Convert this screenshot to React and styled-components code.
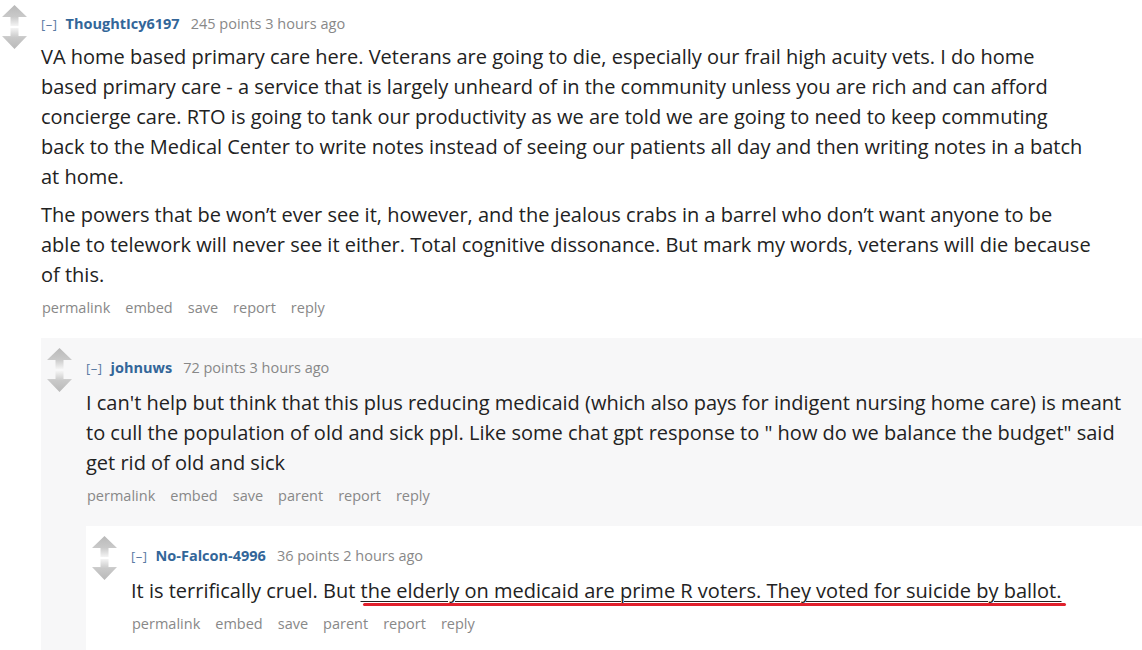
import React from "react";
import styled, { createGlobalStyle } from "styled-components";

const Global = createGlobalStyle`
  html, body { margin: 0; padding: 0; background: #ffffff; }
  body { font-family: "Open Sans", "Noto Sans", sans-serif; overflow: hidden; }
`;

const Page = styled.div`
  width: 1142px;
  height: 650px;
  overflow: hidden;
  background: #fff;
`;

const Comment = styled.div`
  display: flex;
  background: ${(p) => p.$bg};
  padding-bottom: ${(p) => p.$bottom || "0"};
`;

const Votes = styled.div`
  flex: 0 0 auto;
  width: ${(p) => p.$w};
  padding-left: ${(p) => p.$left};
  padding-top: ${(p) => p.$top};
  box-sizing: border-box;
`;

const Main = styled.div`
  flex: 1 1 auto;
  min-width: 0;
`;

const Tagline = styled.div`
  display: flex;
  align-items: baseline;
  font-size: 14.5px;
  line-height: 20px;
  height: 20px;
  margin-top: ${(p) => p.$top};
`;

const Toggle = styled.span`
  color: #5a7ba3;
  font-size: 13px;
  letter-spacing: 0.5px;
  margin-right: 8px;
`;

const Author = styled.span`
  color: #336699;
  font-weight: 700;
  margin-right: 11px;
`;

const Meta = styled.span`
  color: #888;
`;

const Body = styled.div`
  margin-top: ${(p) => p.$gap};
  max-width: 1053px;
  color: #222;
  font-size: 20px;
  line-height: 30px;
`;

const Para = styled.p`
  margin: 0 0 8px 0;
  &:last-child { margin-bottom: 0; }
`;

const Marked = styled.span`
  position: relative;
  text-decoration: underline;
  text-decoration-thickness: 1px;
  text-underline-offset: 3px;
  &::after {
    content: "";
    position: absolute;
    left: 2px;
    right: -4px;
    bottom: -2px;
    height: 3px;
    border-radius: 2px;
    background: #e0202c;
  }
`;

const Actions = styled.ul`
  list-style: none;
  display: flex;
  gap: 15px;
  margin: 8px 0 0 1px;
  padding: 0;
  font-size: 14.5px;
  line-height: 20px;
  color: #888;
`;

const Children = styled.div`
  margin-top: 20px;
`;

function Arrows() {
  return (
    <svg width="25" height="44" viewBox="0 0 25 44">
      <defs>
        <linearGradient id="ga" x1="0" y1="0" x2="0" y2="1">
          <stop offset="0" stopColor="#b9b9b9" />
          <stop offset="0.55" stopColor="#c9c9c9" />
          <stop offset="1" stopColor="#f4f4f4" />
        </linearGradient>
        <linearGradient id="gb" x1="0" y1="1" x2="0" y2="0">
          <stop offset="0" stopColor="#b9b9b9" />
          <stop offset="0.55" stopColor="#c9c9c9" />
          <stop offset="1" stopColor="#f4f4f4" />
        </linearGradient>
      </defs>
      <path d="M12.5 0 L25 12 L16.5 12 L16.5 21 L8.5 21 L8.5 12 L0 12 Z" fill="url(#ga)" />
      <path d="M12.5 44 L25 31 L16.5 31 L16.5 23 L8.5 23 L8.5 31 L0 31 Z" fill="url(#gb)" />
    </svg>
  );
}

function Entry({ author, points, time, actions, top, gap, children }) {
  return (
    <>
      <Tagline $top={top}>
        <Toggle>[–]</Toggle>
        <Author>{author}</Author>
        <Meta>
          {points} points {time}
        </Meta>
      </Tagline>
      <Body $gap={gap}>{children}</Body>
      <Actions>
        {actions.map((a) => (
          <li key={a}>{a}</li>
        ))}
      </Actions>
    </>
  );
}

export default function App() {
  return (
    <Page>
      <Global />
      <Comment $bg="#fff">
        <Votes $w="41px" $left="2px" $top="5px">
          <Arrows />
        </Votes>
        <Main>
          <Entry
            top="14px"
            gap="8px"
            author="ThoughtIcy6197"
            points="245"
            time="3 hours ago"
            actions={["permalink", "embed", "save", "report", "reply"]}
          >
            <Para>
              VA home based primary care here. Veterans are going to die, especially our frail high acuity vets. I do home based primary care - a service that is largely unheard of in the community unless you are rich and can afford concierge care. RTO is going to tank our productivity as we are told we are going to need to keep commuting back to the Medical Center to write notes instead of seeing our patients all day and then writing notes in a batch at home.
            </Para>
            <Para>
              The powers that be won’t ever see it, however, and the jealous crabs in a barrel who don’t want anyone to be able to telework will never see it either. Total cognitive dissonance. But mark my words, veterans will die because of this.
            </Para>
          </Entry>
          <Children>
            <Comment $bg="#f7f7f8" $bottom="200px">
              <Votes $w="45px" $left="6px" $top="10px">
                <Arrows />
              </Votes>
              <Main>
                <Entry
                  top="20px"
                  gap="10px"
                  author="johnuws"
                  points="72"
                  time="3 hours ago"
                  actions={["permalink", "embed", "save", "parent", "report", "reply"]}
                >
                  <Para>
                    I can't help but think that this plus reducing medicaid (which also pays for indigent nursing home care) is meant to cull the population of old and sick ppl. Like some chat gpt response to " how do we balance the budget" said get rid of old and sick
                  </Para>
                </Entry>
                <Children>
                  <Comment $bg="#fff" $bottom="200px">
                    <Votes $w="45px" $left="6px" $top="10px">
                      <Arrows />
                    </Votes>
                    <Main>
                      <Entry
                        top="20px"
                        gap="10px"
                        author="No-Falcon-4996"
                        points="36"
                        time="2 hours ago"
                        actions={["permalink", "embed", "save", "parent", "report", "reply"]}
                      >
                        <Para>
                          It is terrifically cruel. But{" "}
                          <Marked>the elderly on medicaid are prime R voters. They voted for suicide by ballot.</Marked>
                        </Para>
                      </Entry>
                    </Main>
                  </Comment>
                </Children>
              </Main>
            </Comment>
          </Children>
        </Main>
      </Comment>
    </Page>
  );
}
